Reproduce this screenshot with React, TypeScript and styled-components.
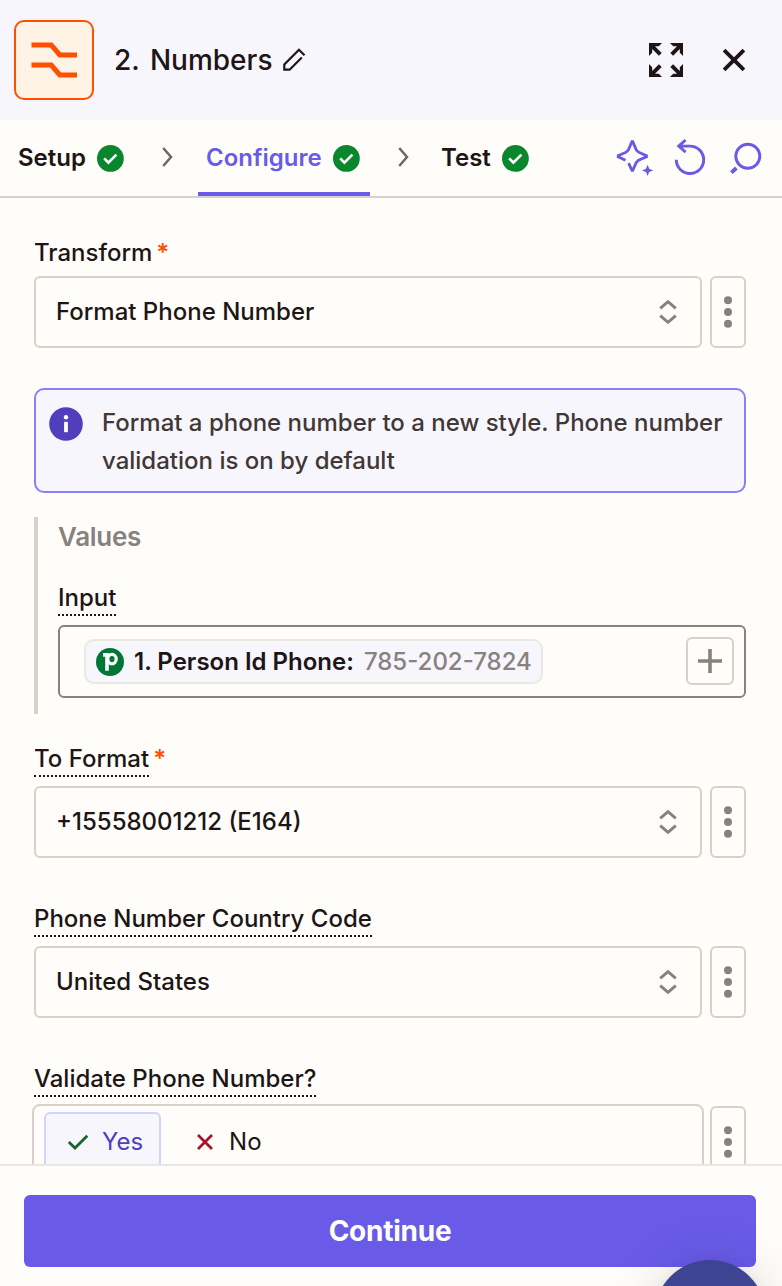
import React from "react";
import styled, { createGlobalStyle } from "styled-components";

const c = {
  page: "#fffdf9",
  lavender: "#f7f6fd",
  ink: "#201515",
  purple: "#695be8",
  deepPurple: "#503ebd",
  border: "#d7d1c9",
  gray: "#88817d",
  orange: "#ff4f00",
  green: "#0a862c",
};

const GlobalStyle = createGlobalStyle`
  * { box-sizing: border-box; }
  body {
    margin: 0;
    background: ${c.page};
    font-family: Inter, "Liberation Sans", sans-serif;
    color: ${c.ink};
    overflow: hidden;
  }
  button { font: inherit; color: inherit; cursor: pointer; padding: 0; background: none; border: 0; }
  svg { display: block; flex: none; }
`;

const Panel = styled.div`
  position: relative;
  display: flex;
  flex-direction: column;
  width: 782px;
  height: 1286px;
  overflow: hidden;
  background: ${c.page};
  white-space: nowrap;
`;

const Header = styled.header`
  display: flex;
  align-items: center;
  flex: none;
  height: 120px;
  padding: 0 28px 0 14px;
  background: ${c.lavender};
`;

const AppIcon = styled.div`
  display: flex;
  width: 80px;
  height: 80px;
  border: 2px solid ${c.orange};
  border-radius: 10px;
  background: #fff3e6;
`;

const Title = styled.h1`
  margin: 0 8px 0 20px;
  font-size: 28px;
  font-weight: 500;
  line-height: 40px;
  word-spacing: 3px;
`;

const HeaderActions = styled.div`
  display: flex;
  align-items: center;
  gap: 28px;
  margin-left: auto;
`;

const IconButton = styled.button`
  display: flex;
`;

const TabBar = styled.nav`
  display: flex;
  align-items: center;
  flex: none;
  height: 78px;
  padding: 0 17px 0 8px;
  border-bottom: 2px solid ${c.border};
`;

const Tab = styled.button<{ $active?: boolean; $width: number }>`
  display: flex;
  align-items: center;
  justify-content: space-between;
  width: ${(p) => p.$width}px;
  height: 76px;
  padding: 3px 10px 0 ${(p) => (p.$active ? 8 : 10)}px;
  border-bottom: 4px solid ${(p) => (p.$active ? c.purple : "transparent")};
  color: ${(p) => (p.$active ? c.purple : c.ink)};
  font-size: 24px;
  font-weight: 600;
`;

const Separator = styled.span<{ $width: number; $inset: number }>`
  display: flex;
  justify-content: center;
  width: ${(p) => p.$width}px;
  padding: 0 0 3px ${(p) => p.$inset}px;
`;

const Tools = styled.div`
  display: flex;
  gap: 18px;
  margin-left: auto;
`;

const Body = styled.main`
  flex: 1;
  min-height: 0;
  overflow: hidden;
  padding: 40px 36px 0 34px;
`;

const Field = styled.section<{ $top?: number }>`
  margin-top: ${(p) => p.$top ?? 0}px;
`;

const LabelRow = styled.div<{ $hint?: boolean }>`
  display: flex;
  align-items: flex-start;
  margin-bottom: ${(p) => (p.$hint ? 9 : 8)}px;
`;

const Label = styled.label<{ $hint?: boolean }>`
  font-size: 24px;
  font-weight: 500;
  line-height: 30px;
  ${(p) => p.$hint && `padding-bottom: 1px; border-bottom: 2px dotted ${c.ink};`}
`;

const Required = styled.span`
  margin-left: 4px;
  color: ${c.orange};
  font-size: 24px;
  font-weight: 600;
  line-height: 30px;
`;

const ControlRow = styled.div`
  display: flex;
  gap: 8px;
`;

const SelectBox = styled.button`
  display: flex;
  align-items: center;
  justify-content: space-between;
  flex: 1;
  height: 72px;
  padding: 0 20px;
  border: 2px solid ${c.border};
  border-radius: 6px;
  font-size: 24px;
  font-weight: 500;
`;

const SelectValue = styled.span`
  padding-bottom: 2px;
`;

const MoreButton = styled.button`
  display: flex;
  align-items: center;
  justify-content: center;
  width: 36px;
  height: 72px;
  border: 2px solid ${c.border};
  border-radius: 6px;
`;

const Notice = styled.aside`
  display: flex;
  gap: 19px;
  height: 105px;
  margin-top: 40px;
  padding: 14px 13px;
  border: 2px solid #8880fb;
  border-radius: 10px;
  background: ${c.lavender};
  color: #413735;
`;

const NoticeMark = styled.span`
  padding-top: 3px;
`;

const NoticeText = styled.p`
  margin: 0;
  font-size: 24px;
  font-weight: 500;
  line-height: 38px;
`;

const Group = styled.section`
  height: 197px;
  margin-top: 24px;
  padding: 5px 0 0 20px;
  border-left: 4px solid ${c.border};
`;

const GroupTitle = styled.h2`
  margin: 0 0 31px;
  color: ${c.gray};
  font-size: 26px;
  font-weight: 600;
  line-height: 30px;
  letter-spacing: -0.3px;
`;

const TokenInput = styled.div`
  display: flex;
  align-items: center;
  justify-content: space-between;
  height: 73px;
  padding: 0 10px 0 24px;
  border: 2px solid ${c.gray};
  border-radius: 6px;
`;

const Token = styled.span`
  display: flex;
  align-items: center;
  width: 459px;
  height: 45px;
  padding: 0 10px;
  border: 2px solid #ebe9df;
  border-radius: 10px;
  background: ${c.lavender};
  font-size: 24px;
`;

const TokenName = styled.strong`
  margin: 0 10px 0 10px;
  font-weight: 600;
`;

const TokenValue = styled.span`
  color: ${c.gray};
  font-weight: 500;
`;

const AddButton = styled.button`
  display: flex;
  align-items: center;
  justify-content: center;
  width: 48px;
  height: 48px;
  margin-bottom: 1px;
  border: 2px solid ${c.border};
  border-radius: 6px;
`;

const RadioBox = styled.div`
  display: flex;
  gap: 10px;
  flex: 1;
  height: 76px;
  margin: -2px;
  padding: 6px 10px;
  border: 2px solid ${c.border};
  border-radius: 8px;
`;

const Choice = styled.button<{ $selected?: boolean }>`
  display: flex;
  align-items: center;
  gap: 12px;
  height: 60px;
  padding: 0 16px 2px 20px;
  border: 2px solid ${(p) => (p.$selected ? "#d3d1ff" : "transparent")};
  border-radius: 6px;
  background: ${(p) => (p.$selected ? c.lavender : "transparent")};
  color: ${(p) => (p.$selected ? c.deepPurple : c.ink)};
  font-size: 24px;
  font-weight: 400;
`;

const Footer = styled.footer`
  flex: none;
  height: 122px;
  padding: 29px 26px 0 24px;
  border-top: 2px solid #e8e7e3;
`;

const ContinueButton = styled.button`
  width: 100%;
  height: 72px;
  border-radius: 6px;
  background: ${c.purple};
  color: #fff;
  font-size: 28px;
  font-weight: 700;
  letter-spacing: -0.25px;
`;

const HelpBubble = styled.div`
  position: absolute;
  left: 654px;
  top: 1260px;
  width: 112px;
  height: 112px;
  border-radius: 50%;
  background: #3d4592;
  box-shadow: 0 2px 12px rgba(0, 0, 0, 0.08), 0 4px 56px rgba(0, 0, 0, 0.14);
`;

const NumbersIcon = () => (
  <svg width="76" height="76" viewBox="0 0 76 76" fill="none" stroke={c.orange} strokeWidth="5">
    <path d="M15.5 22.9h19.7l8.6 10h17.2M15.5 43h19.7l8.6 10h17.2" />
  </svg>
);

const PencilIcon = () => (
  <svg width="28" height="28" viewBox="0 0 28 28" fill="none" stroke={c.ink} strokeWidth="2.2">
    <path d="M19 3.7 4.3 18.4v5.3h5.3L21.8 11.5M18.2 3l6.3 6.3" />
  </svg>
);

const ExpandIcon = () => (
  <svg width="40" height="40" viewBox="0 0 40 40">
    {[0, 90, 180, 270].map((a) => (
      <g key={a} transform={`rotate(${a} 20 20)`}>
        <path d="M3 3h13l-3.2 3.2H9l6.7 6.7-2.8 2.8L6.2 9v3.8L3 16Z" fill={c.ink} />
      </g>
    ))}
  </svg>
);

const CloseIcon = () => (
  <svg width="40" height="40" viewBox="0 0 40 40" stroke={c.ink} strokeWidth="3.8">
    <path d="m10.1 10.1 19.8 19.8M29.9 10.1 10.1 29.9" />
  </svg>
);

const CheckBadge = () => (
  <svg width="27" height="28" viewBox="0 0 27 28">
    <circle cx="13.4" cy="14.4" r="13.4" fill={c.green} />
    <path d="m7.2 14.4 4.2 4.2 8-8" fill="none" stroke="#fff" strokeWidth="2.7" />
  </svg>
);

const ChevronIcon = () => (
  <svg width="14" height="22" viewBox="0 0 14 22" fill="none" stroke="#6b6765" strokeWidth="2.5">
    <path d="M3.2 2 11 11 3.2 20" />
  </svg>
);

const SparkleIcon = () => (
  <svg width="38" height="40" viewBox="0 0 38 40" fill="none" stroke={c.purple} strokeWidth="2.8">
    <path d="M10.5 22.2 3.2 18.9v-1.2l7.9-3.5 2.3-2.3 3.5-8.2h.9l3.5 8.2 2.3 2.3 7.9 3.5v1.2l-7.9 3.3-2.4 2.4-3.4 7.8h-.9l-3.3-7.2" />
    <path d="m32.6 26.8 1.6 4 4 1.6-4 1.6-1.6 4-1.6-4-4-1.6 4-1.6Z" fill={c.purple} stroke="none" />
  </svg>
);

const UndoIcon = () => (
  <svg width="38" height="40" viewBox="0 0 38 40" fill="none" stroke={c.purple} strokeWidth="2.9">
    <path d="M5.3 21.8A13.7 13.7 0 1 0 19 8.1H7M14.6 2 7.7 8.1l6.9 6" />
  </svg>
);

const LoupeIcon = () => (
  <svg width="38" height="40" viewBox="0 0 38 40" fill="none" stroke={c.purple} strokeWidth="2.9">
    <circle cx="20.8" cy="18.3" r="12" />
    <path d="m9.4 30-5 4.7" strokeWidth="3.8" />
  </svg>
);

const SortIcon = () => (
  <svg width="24" height="28" viewBox="0 0 24 28" fill="none" stroke={c.gray} strokeWidth="3">
    <path d="m4.2 10.3 7.8-6.6 7.8 6.6M4.2 17.7l7.8 6.6 7.8-6.6" />
  </svg>
);

const DotsIcon = () => (
  <svg width="8" height="32" viewBox="0 0 8 32" fill={c.gray}>
    <circle cx="4" cy="4.2" r="4" />
    <circle cx="4" cy="16" r="4" />
    <circle cx="4" cy="27.8" r="4" />
  </svg>
);

const InfoIcon = () => (
  <svg width="34" height="34" viewBox="0 0 34 34">
    <circle cx="17" cy="17" r="16.8" fill={c.deepPurple} />
    <circle cx="17" cy="10.2" r="2.2" fill="#fff" />
    <path d="M17 14.8v10.4" stroke="#fff" strokeWidth="3.8" />
  </svg>
);

const PipedriveIcon = () => (
  <svg width="28" height="28" viewBox="0 0 28 28" fill="none">
    <circle cx="14" cy="14" r="14" fill="#017737" />
    <ellipse cx="16" cy="11.1" rx="4.2" ry="4.7" stroke="#fff" strokeWidth="3.2" />
    <path d="M7 6.9h4V22.8" stroke="#fff" strokeWidth="3.6" />
  </svg>
);

const PlusIcon = () => (
  <svg width="24" height="24" viewBox="0 0 24 24" stroke={c.gray} strokeWidth="3.6">
    <path d="M12 0v24M0 12h24" />
  </svg>
);

const TickIcon = () => (
  <svg width="24" height="24" viewBox="0 0 24 24" fill="none" stroke="#1a6329" strokeWidth="2.8">
    <path d="m2.8 13 6.2 6L21.3 6.8" />
  </svg>
);

const CrossIcon = () => (
  <svg width="24" height="24" viewBox="0 0 24 24" stroke="#a8122a" strokeWidth="2.8">
    <path d="m5 6 14 14M19 6l-14 14" />
  </svg>
);

const MoreOptions = () => (
  <MoreButton aria-label="More options">
    <DotsIcon />
  </MoreButton>
);

type SelectFieldProps = { label: string; value: string; hint?: boolean; required?: boolean; top?: number };

const SelectField = ({ label, value, hint, required, top }: SelectFieldProps) => (
  <Field $top={top}>
    <LabelRow $hint={hint}>
      <Label $hint={hint}>{label}</Label>
      {required && <Required>*</Required>}
    </LabelRow>
    <ControlRow>
      <SelectBox>
        <SelectValue>{value}</SelectValue>
        <SortIcon />
      </SelectBox>
      <MoreOptions />
    </ControlRow>
  </Field>
);

export default function App() {
  return (
    <>
      <GlobalStyle />
      <Panel>
        <Header>
          <AppIcon>
            <NumbersIcon />
          </AppIcon>
          <Title>2. Numbers</Title>
          <IconButton aria-label="Rename step">
            <PencilIcon />
          </IconButton>
          <HeaderActions>
            <IconButton aria-label="Expand">
              <ExpandIcon />
            </IconButton>
            <IconButton aria-label="Close">
              <CloseIcon />
            </IconButton>
          </HeaderActions>
        </Header>
        <TabBar>
          <Tab $width={126}>
            Setup
            <CheckBadge />
          </Tab>
          <Separator $width={64} $inset={2}>
            <ChevronIcon />
          </Separator>
          <Tab $width={172} $active>
            Configure
            <CheckBadge />
          </Tab>
          <Separator $width={61} $inset={5}>
            <ChevronIcon />
          </Separator>
          <Tab $width={108}>
            Test
            <CheckBadge />
          </Tab>
          <Tools>
            <IconButton aria-label="Suggest">
              <SparkleIcon />
            </IconButton>
            <IconButton aria-label="Reset">
              <UndoIcon />
            </IconButton>
            <IconButton aria-label="Search">
              <LoupeIcon />
            </IconButton>
          </Tools>
        </TabBar>
        <Body>
          <SelectField label="Transform" value="Format Phone Number" required />
          <Notice>
            <NoticeMark>
              <InfoIcon />
            </NoticeMark>
            <NoticeText>
              Format a phone number to a new style. Phone number
              <br />
              validation is on by default
            </NoticeText>
          </Notice>
          <Group>
            <GroupTitle>Values</GroupTitle>
            <LabelRow $hint>
              <Label $hint>Input</Label>
            </LabelRow>
            <TokenInput>
              <Token>
                <PipedriveIcon />
                <TokenName>1. Person Id Phone:</TokenName>
                <TokenValue>785-202-7824</TokenValue>
              </Token>
              <AddButton aria-label="Insert data">
                <PlusIcon />
              </AddButton>
            </TokenInput>
          </Group>
          <SelectField top={30} label="To Format" value="+15558001212 (E164)" hint required />
          <SelectField top={46} label="Phone Number Country Code" value="United States" hint />
          <Field $top={46}>
            <LabelRow $hint>
              <Label $hint>Validate Phone Number?</Label>
            </LabelRow>
            <ControlRow>
              <RadioBox>
                <Choice $selected>
                  <TickIcon />
                  Yes
                </Choice>
                <Choice>
                  <CrossIcon />
                  No
                </Choice>
              </RadioBox>
              <MoreOptions />
            </ControlRow>
          </Field>
        </Body>
        <Footer>
          <ContinueButton>Continue</ContinueButton>
        </Footer>
        <HelpBubble />
      </Panel>
    </>
  );
}
